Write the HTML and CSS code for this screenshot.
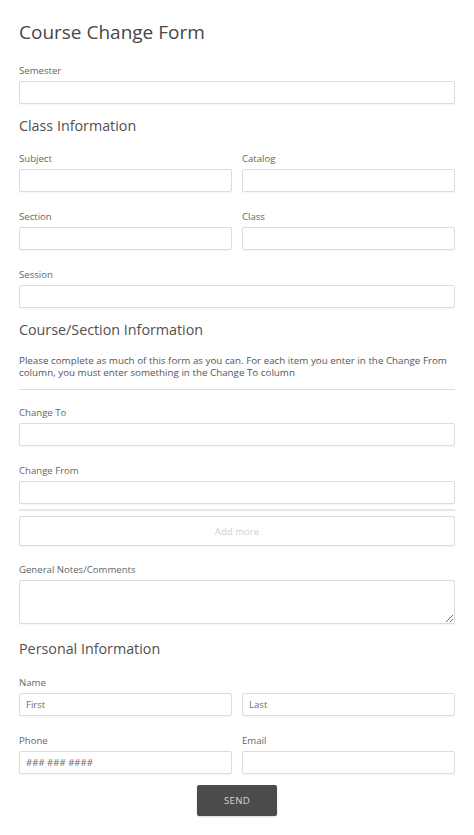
FILE: index.html
```html
<!DOCTYPE html>
<html lang="en">
<head>
<meta charset="utf-8">
<title>Course Change Form</title>
<link rel="stylesheet" href="styles.css">
</head>
<body>
<form class="form">
  <h1 class="title">Course Change Form</h1>

  <div class="field mt-title">
    <label class="label">Semester</label>
    <input class="input" type="text">
  </div>

  <h2 class="heading">Class Information</h2>

  <div class="row mt-head">
    <div class="field"><label class="label">Subject</label><input class="input" type="text"></div>
    <div class="field"><label class="label">Catalog</label><input class="input" type="text"></div>
  </div>
  <div class="row mt-field">
    <div class="field"><label class="label">Section</label><input class="input" type="text"></div>
    <div class="field"><label class="label">Class</label><input class="input" type="text"></div>
  </div>
  <div class="field mt-field">
    <label class="label">Session</label>
    <input class="input" type="text">
  </div>

  <h2 class="heading">Course/Section Information</h2>
  <p class="desc">Please complete as much of this form as you can. For each item you enter in the Change From<br>column, you must enter something in the Change To column</p>
  <hr class="divider">

  <div class="field mt-head">
    <label class="label">Change To</label>
    <input class="input" type="text">
  </div>
  <div class="field mt-field">
    <label class="label">Change From</label>
    <input class="input" type="text">
  </div>
  <div class="sep"></div>
  <button type="button" class="addmore">Add more</button>

  <div class="field mt-notes">
    <label class="label">General Notes/Comments</label>
    <textarea class="input textarea"></textarea>
  </div>

  <h2 class="heading mt-personal">Personal Information</h2>
  <div class="field mt-notes">
    <label class="label">Name</label>
    <div class="pair">
      <input class="input" type="text" placeholder="First">
      <input class="input" type="text" placeholder="Last">
    </div>
  </div>
  <div class="row mt-field">
    <div class="field"><label class="label">Phone</label><input class="input" type="text" placeholder="### ### ####"></div>
    <div class="field"><label class="label">Email</label><input class="input" type="text"></div>
  </div>

  <div class="actions">
    <button type="button" class="send">SEND</button>
  </div>
</form>
</body>
</html>
```

FILE: styles.css
```css
* { box-sizing: border-box; }

html, body {
  margin: 0;
  padding: 0;
  background: #ffffff;
}

body {
  font-family: "Open Sans", "Liberation Sans", sans-serif;
  color: #555;
}

.form {
  padding: 19px 19px 20px;
  display: flex;
  flex-direction: column;
}

.title {
  margin: 0;
  font-size: 19px;
  line-height: 27px;
  font-weight: 400;
  color: #474747;
}

.heading {
  margin: 12px 0 0;
  font-size: 14.3px;
  line-height: 20px;
  font-weight: 400;
  color: #505050;
}

.field {
  display: flex;
  flex-direction: column;
  min-width: 0;
}

.label {
  font-size: 9.6px;
  line-height: 14px;
  padding-top: 1px;
  color: #666;
  margin-bottom: 3px;
}

.input {
  height: 23px;
  width: 100%;
  border: 1px solid #dcdcdc;
  border-radius: 2px;
  background: #fff;
  box-shadow: 0 1px 1px rgba(0, 0, 0, 0.04);
  font-family: "Open Sans", "Liberation Sans", sans-serif;
  font-size: 9.6px;
  color: #555;
  padding: 0 6px;
  outline: none;
}

.input::placeholder {
  color: #6d6d6d;
  opacity: 1;
}

.textarea {
  height: 44px;
  resize: vertical;
  padding: 4px 6px;
}

.row, .pair {
  display: grid;
  grid-template-columns: 1fr 1fr;
  column-gap: 10px;
}

.mt-title { margin-top: 17px; }
.mt-head { margin-top: 15px; }
.mt-field { margin-top: 17px; }
.mt-notes { margin-top: 16px; }
.mt-personal { margin-top: 15px; }

.desc {
  margin: 15px 0 0;
  font-size: 9.8px;
  line-height: 12px;
  color: #555;
  white-space: nowrap;
}

.divider {
  margin: 10px 0 0;
  border: 0;
  border-top: 1px solid #dedede;
  height: 0;
}

.sep {
  margin-top: 5px;
  height: 2px;
  background: #e6e6e6;
}

.addmore {
  margin-top: 5px;
  height: 30px;
  width: 100%;
  border: 1px solid #dcdcdc;
  border-radius: 2px;
  background: #fff;
  box-shadow: 0 1px 1px rgba(0, 0, 0, 0.04);
  font-family: "Open Sans", "Liberation Sans", sans-serif;
  font-size: 9.6px;
  color: #cfcfcf;
  cursor: pointer;
}

.actions {
  margin-top: 11px;
  display: flex;
  justify-content: center;
}

.send {
  width: 80px;
  height: 31px;
  border: 0;
  border-radius: 2px;
  background: #4b4b4b;
  color: #d8d8d8;
  font-family: "Open Sans", "Liberation Sans", sans-serif;
  font-size: 9.6px;
  letter-spacing: 0.3px;
  box-shadow: 0 1px 2px rgba(0, 0, 0, 0.15);
  cursor: pointer;
}
```
